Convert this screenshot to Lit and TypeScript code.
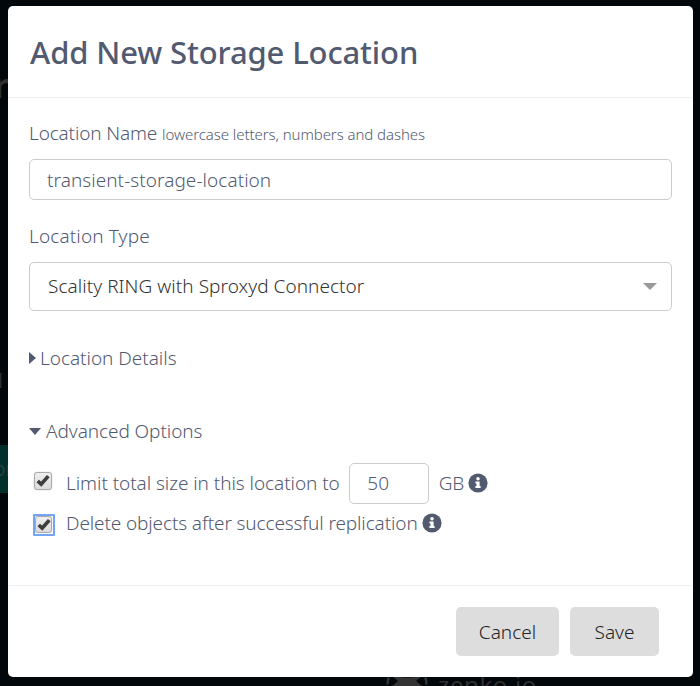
import { LitElement, html, css } from "lit";
import { customElement, property } from "lit/decorators.js";
import { classMap } from "lit/directives/class-map.js";

@customElement("info-icon")
class InfoIcon extends LitElement {
  static styles = css`
    :host { display: block; width: 20px; height: 20px; }
    svg { display: block; }
  `;
  render() {
    return html`<svg width="20" height="20" viewBox="0 0 20 20">
      <circle cx="10" cy="10" r="9.6" fill="#525a70"></circle>
      <circle cx="10" cy="5.7" r="1.75" fill="#fff"></circle>
      <path fill="#fff" d="M7.5 8.4h4.1v4.7h1v2h-5.2v-2h1.1v-2.7h-1z"></path>
    </svg>`;
  }
}

@customElement("check-box")
class CheckBox extends LitElement {
  @property({ type: Boolean }) focused = false;
  static styles = css`
    :host { display: block; width: 22px; height: 22px; }
    .ring { box-sizing: border-box; width: 22px; height: 22px; padding: 2px; border-radius: 1px; }
    .focused { box-shadow: inset 0 0 0 2px #72a4f8; }
    .box { box-sizing: border-box; width: 18px; height: 18px; border: 1px solid #aaa; border-radius: 3px;
      background: linear-gradient(#eee, #dcdcdc); box-shadow: 0 0 1px #999; }
    .focused .box { width: 17px; height: 17px; }
    svg { display: block; }
  `;
  render() {
    return html`<div class=${classMap({ ring: true, focused: this.focused })}>
      <div class="box"><svg width="16" height="16" viewBox="0 0 16 16">
        <path d="M2.7 8 6.2 11.2 13.3 3.1" fill="none" stroke="#3e3e3e" stroke-width="3.7"></path>
      </svg></div>
    </div>`;
  }
}

@customElement("app-root")
class AppRoot extends LitElement {
  static styles = css`
    :host { display: block; position: relative; box-sizing: border-box; width: 700px; height: 686px; padding: 6px 7px 9px 8px;
      overflow: hidden; background: #02070b; color: #525a70;
      font: 300 19px/26px "Noto Sans", sans-serif; white-space: nowrap; }
    .behind { position: absolute; color: #303030; font-weight: 400; }
    .b1 { left: -6px; top: 65px; font-size: 35px; line-height: 40px; font-weight: 600; }
    .b2 { left: -2px; top: 368px; font-size: 19px; }
    .b3 { left: 0; top: 445px; width: 8px; height: 48px; background: #00302b; line-height: 48px; text-indent: -6px; overflow: hidden; color: #2b3f3c; }
    .b4 { left: 438px; top: 671px; font-size: 24px; line-height: 28px; letter-spacing: .6px; }
    .cat { left: 386px; top: 676px; }
    .modal { position: relative; display: flex; flex-direction: column; box-sizing: border-box; height: 671px; background: #fff; border-radius: 5px; }
    header { box-sizing: border-box; height: 92px; padding: 26px 22px 0; border-bottom: 1px solid #f1f1f1; }
    h1 { margin: 0; font-size: 31px; line-height: 40px; font-weight: 500; }
    main { flex: 1; padding: 22px 21px 0; }
    .label { height: 26px; }
    .label small { font-size: 15px; letter-spacing: -.07px; }
    .t-title { letter-spacing: -.13px; }
    .t-name { letter-spacing: -.15px; }
    .t-value { letter-spacing: .05px; }
    .t-type { letter-spacing: .13px; }
    .t-select { letter-spacing: .05px; position: relative; top: -1px; }
    .t-details { letter-spacing: -.03px; }
    .t-advanced { letter-spacing: -.07px; }
    .t-limit { letter-spacing: -.06px; position: relative; top: -1px; }
    .t-size { position: relative; top: -1px; left: -.5px; letter-spacing: .1px; }
    .t-gb { position: relative; top: -1px; letter-spacing: -.3px; }
    .t-delete { letter-spacing: -.12px; }
    .field { display: flex; align-items: center; box-sizing: border-box; border: 1px solid #ccc; border-radius: 5px; }
    .name { height: 41px; margin: 13px 0 23px; padding-left: 17px; }
    .select { height: 49px; margin: 13px 0 34px; padding: 0 14px 0 18px; justify-content: space-between; color: #333; }
    .arrow { border: 7px solid transparent; border-top-color: #999; border-bottom: 0; }
    .fold { display: flex; align-items: center; height: 26px; }
    .details { gap: 4px; margin-bottom: 47px; }
    .advanced { gap: 5px; margin-bottom: 19px; }
    .right { border: 6px solid transparent; border-left: 7.5px solid #525a70; border-right: 0; }
    .down { border: 6px solid transparent; border-top: 7px solid #525a70; border-bottom: 0; }
    .option { display: flex; align-items: center; padding-left: 3px; }
    .limit { height: 41px; }
    .delete { height: 38px; }
    .option check-box { margin-right: 12px; position: relative; top: -3px; }
    .delete check-box { top: 2px; left: 1px; }
    .size { width: 80px; height: 41px; margin: 0 10px 0 9px; padding-left: 18px; }
    .option info-icon { margin-left: 4px; position: relative; top: -1px; }
    .delete info-icon { top: 0; }
    footer { display: flex; justify-content: flex-end; gap: 11px; box-sizing: border-box; height: 92px; padding: 21px 34px 0; border-top: 1px solid #f1f1f1; }
    button { height: 49px; padding: 0; border: 0; border-radius: 5px; background: #ddd; color: #222; font: inherit; }
    .cancel { width: 103px; }
    .save { width: 89px; }
  `;

  render() {
    return html`
      <span class="behind b1">r</span>
      <span class="behind b2">l</span>
      <span class="behind b3">or</span>
      <svg class="behind cat" width="42" height="10" viewBox="0 0 42 10">
        <path d="M.5 9Q0 5 1.5 1L4 2Q2.500 5 3 8ZM41.500 9Q42 5 40.500 1L38 2Q39.500 5 39 8ZM7 1h7q7 1 14 0h7L30 5l6 5H6l6-5Z" fill="#333"></path>
      </svg>
      <span class="behind b4">zenko.io</span>
      <div class="modal">
        <header><h1><span class="t-title">Add New Storage Location</span></h1></header>
        <main>
          <div class="label"><span class="t-name">Location Name</span> <small>lowercase letters, numbers and dashes</small></div>
          <div class="field name"><span class="t-value">transient-storage-location</span></div>
          <div class="label"><span class="t-type">Location Type</span></div>
          <div class="field select"><span class="t-select">Scality RING with Sproxyd Connector</span><i class="arrow"></i></div>
          <div class="fold details"><i class="right"></i><span class="t-details">Location Details</span></div>
          <div class="fold advanced"><i class="down"></i><span class="t-advanced">Advanced Options</span></div>
          <div class="option limit">
            <check-box></check-box><span class="t-limit">Limit total size in this location to</span>
            <div class="field size"><span class="t-size">50</span></div>
            <span class="t-gb">GB</span><info-icon></info-icon>
          </div>
          <div class="option delete">
            <check-box focused></check-box><span class="t-delete">Delete objects after successful replication</span><info-icon></info-icon>
          </div>
        </main>
        <footer><button class="cancel">Cancel</button><button class="save">Save</button></footer>
      </div>
    `;
  }
}
